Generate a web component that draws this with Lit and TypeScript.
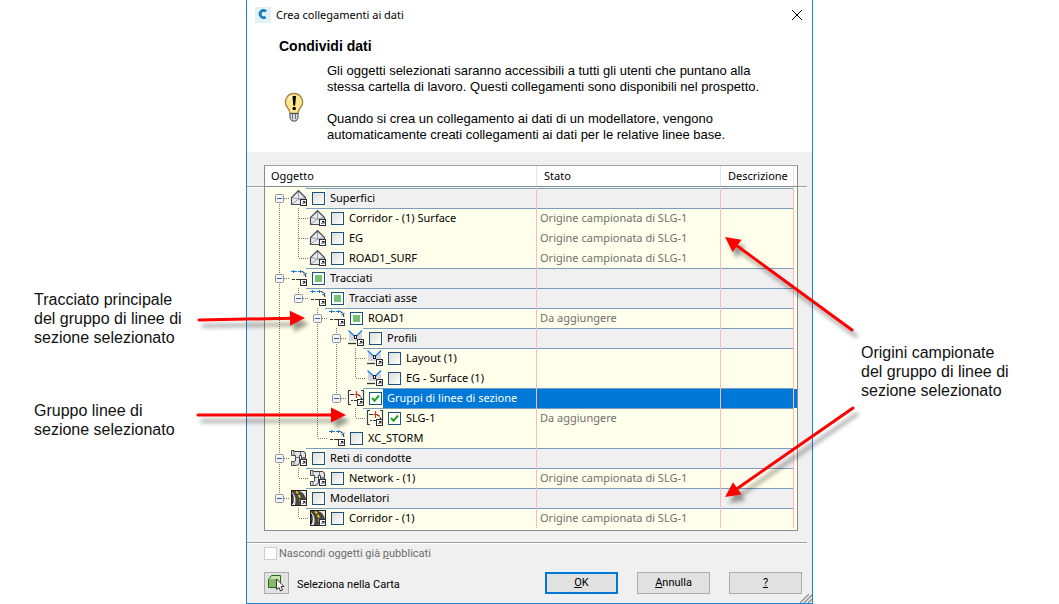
import { LitElement, html, css, svg, nothing } from "lit";
import { customElement } from "lit/decorators.js";

type Kind = "surface" | "alignment" | "profile" | "section" | "pipe" | "corridor";
type Check = "off" | "on" | "mixed";

interface Item {
  label: string;
  kind: Kind;
  check?: Check;
  state?: string;
  group?: boolean;
  selected?: boolean;
  children?: Item[];
}

interface Row {
  item: Item;
  /** For every ancestor level: does its vertical guide pass through this row? */
  trail: boolean[];
  up: boolean;
  down: boolean;
}

const SAMPLED = "Origine campionata di SLG-1";
const TO_ADD = "Da aggiungere";

const TREE: Item[] = [
  {
    label: "Superfici", kind: "surface", group: true,
    children: [
      { label: "Corridor - (1) Surface", kind: "surface", state: SAMPLED },
      { label: "EG", kind: "surface", state: SAMPLED },
      { label: "ROAD1_SURF", kind: "surface", state: SAMPLED },
    ],
  },
  {
    label: "Tracciati", kind: "alignment", group: true, check: "mixed",
    children: [
      {
        label: "Tracciati asse", kind: "alignment", group: true, check: "mixed",
        children: [
          {
            label: "ROAD1", kind: "alignment", check: "mixed", state: TO_ADD,
            children: [
              {
                label: "Profili", kind: "profile", group: true,
                children: [
                  { label: "Layout (1)", kind: "profile" },
                  { label: "EG - Surface (1)", kind: "profile" },
                ],
              },
              {
                label: "Gruppi di linee di sezione", kind: "section", group: true, check: "on", selected: true,
                children: [{ label: "SLG-1", kind: "section", check: "on", state: TO_ADD }],
              },
            ],
          },
          { label: "XC_STORM", kind: "alignment" },
        ],
      },
    ],
  },
  {
    label: "Reti di condotte", kind: "pipe", group: true,
    children: [{ label: "Network - (1)", kind: "pipe", state: SAMPLED }],
  },
  {
    label: "Modellatori", kind: "corridor", group: true,
    children: [{ label: "Corridor - (1)", kind: "corridor", state: SAMPLED }],
  },
];

function flatten(items: Item[], trail: boolean[] = []): Row[] {
  return items.flatMap((item, i) => {
    const down = i < items.length - 1;
    const row: Row = { item, trail, up: trail.length > 0 || i > 0, down };
    return [row, ...flatten(item.children ?? [], [...trail, down])];
  });
}

const shortcut = svg`
  <rect x="9.5" y="9.5" width="6" height="6" fill="#fff" stroke="#2b3038"/>
  <path d="M11.5 14 L13.8 11.7 M12 11.5 H14 V13.5" fill="none" stroke="#111"/>`;

const ART: Record<Kind, unknown> = {
  surface: svg`
    <path d="M.5 7 L7.5 .5 L14.5 7 V14.5 H.5 Z" fill="#e9ebee"/>
    <path d="M7.5 1 V9 M1 7.500 L7.500 9 L14.500 7.500 M7.500 9 L1 14 M7.500 9 L12 12" fill="none" stroke="#9aa0a7"/>
    <path d="M9 14.5 H.5 V7.5 L7.5 .7 L14.5 7.5 V9" fill="none" stroke="#4a4f57" stroke-width="1.2"/>`,
  alignment: svg`
    <path d="M0 1.500 H2 M3 1.500 H6 M7 1.500 H11" fill="none" stroke="#1e7fd6" stroke-width="1.2"/>
    <path d="M2.500 0 V3 M9.500 0 V3" stroke="#1e7fd6"/>
    <path d="M11 1.500 Q14.500 2.500 15 8" fill="none" stroke="#333" stroke-width="1.2" stroke-dasharray="3 1"/>
    <path d="M12.500 5 L15.500 3" stroke="#1e7fd6" stroke-width="1.2"/>
    <path d="M1 9.500 H4 M5 9.500 H9" stroke="#333" stroke-width="1.2"/>`,
  profile: svg`
    <path d="M1 1 L7.500 8 L14 1 V11 H1 Z" fill="#d3d6e0"/>
    <path d="M.5 .5 L7.5 7 L14 .5" fill="none" stroke="#1e84e8" stroke-width="1.400"/>
    <rect x="6.500" y="5.500" width="2" height="3" fill="#fff" stroke="#222"/>
    <path d="M0 13.500 H8" stroke="#333" stroke-width="1.300"/>`,
  section: svg`
    <path d="M3 .5 H.5 V14.500 H3 M13 .5 H15.500 V10" fill="none" stroke="#3a3f48" stroke-width="1.200"/>
    <path d="M2 4.500 H6 M3 10.500 H5 M6 10.500 H9" stroke="#333" stroke-width="1.200"/>
    <path d="M10 5 Q13 5.500 13.500 9" fill="none" stroke="#333" stroke-width="1.200" stroke-dasharray="3 1"/>
    <path d="M8.500 1 V8 M6.500 4.500 H11" stroke="#ef2a1e" stroke-width="1.200"/>`,
  pipe: svg`
    <path d="M.5 .5 H3 V1.500 H12 Q14.500 1.500 14.500 4 V9 H10.500 V5.500 H8.500 V12 Q8.500 15.500 5 15.500 H.5 V11.500 H3.500 Q4.500 11.500 4.500 10 V5.500 H.5 Z" fill="#e2e3e5" stroke="#3c4047"/>
    <path d="M3 1 V5.500 M4.500 7.500 H8.500 M10.500 7.500 H14.500 M3 11.500 V15.500 M9.500 2 V5" fill="none" stroke="#6b7078"/>`,
  corridor: svg`
    <rect x=".5" y=".5" width="15" height="15" fill="#e8e8e8" stroke="#222"/>
    <path d="M1 1 H8 Q13 2 15 9 V15 H4 Q6 7 1 2 Z" fill="#454545"/>
    <path d="M1 4 Q3 9 1 14" fill="none" stroke="#222" stroke-width="1.500"/>
    <path d="M5 1.500 Q10 5 9.500 15" fill="none" stroke="#ffd400" stroke-width="1.800" stroke-dasharray="3 1.500"/>`,
};

@customElement("tree-guide")
class TreeGuide extends LitElement {
  static properties = {
    up: { type: Boolean },
    down: { type: Boolean },
    branch: { type: Boolean },
    expander: { type: Boolean },
  };
  declare up: boolean;
  declare down: boolean;
  declare branch: boolean;
  declare expander: boolean;

  static styles = css`
    :host { display: block; flex: none; width: 19px; height: 20px; }
    svg { display: block; }
    .dots { stroke: #77776f; stroke-dasharray: 1 1; fill: none; }
    .box { fill: #f4f4f6; stroke: #8e959e; }
    .minus { stroke: #2b5fb4; }
  `;

  render() {
    return html`<svg width="19" height="20" aria-hidden="true">
      ${this.up ? svg`<path class="dots" d="M9.5 0 V10"/>` : nothing}
      ${this.down ? svg`<path class="dots" d="M9.5 10 V20"/>` : nothing}
      ${this.branch ? svg`<path class="dots" d="M10 10.5 H19"/>` : nothing}
      ${this.expander
        ? svg`<rect class="box" x="5.5" y="6.5" width="8" height="8" rx="1"/><path class="minus" d="M7 10.5 H12"/>`
        : nothing}
    </svg>`;
  }
}

@customElement("object-table")
class ObjectTable extends LitElement {
  static styles = css`
    :host { display: block; font: 12px/18px "Noto Sans", sans-serif; color: #000; }
    .frame {
      border: 1px solid #868a91;
      border-top-color: #a0a0a0;
      background: #ffffec;
      padding-bottom: 2px;
    }
    table { width: 100%; table-layout: fixed; border-collapse: separate; border-spacing: 0; }
    .c-state { width: 184px; }
    .c-desc { width: 73px; }
    .c-end { width: 3px; }
    th {
      height: 20px;
      padding: 0 0 0 6px;
      background: #fff;
      font-size: 11px;
      font-weight: 400;
      text-align: left;
      border-bottom: 1px solid #868a91;
      box-shadow: inset -1px 0 0 #e3e3e3;
    }
    th + th { padding-left: 7px; }
    th.end { padding: 0; box-shadow: none; }
    td { padding: 0; border-right: 1px solid #ffb9b9; }
    td.end { border-right: 0; }
    tbody::before { content: ""; display: block; height: 1px; }
    .tree { display: flex; height: 20px; padding-left: 5px; }
    .icon { flex: none; width: 17px; height: 20px; }
    .icon svg { display: block; overflow: visible; position: relative; z-index: 1; }
    .entry { flex: 1; min-width: 0; display: flex; align-items: center; padding-left: 6px; }
    .entry label {
      flex: 1;
      min-width: 0;
      height: 19px;
      padding-left: 4px;
      font-size: 11px;
      white-space: nowrap;
      margin-left: 1px;
    }
    .cell { padding-left: 3px; font-size: 11px; color: #6f6f6f; white-space: nowrap; }
    .entry, .cell { border-top: 1px solid transparent; box-sizing: border-box; height: 20px; }
    .group .entry, .group .cell { border-top-color: #7a9cbd; box-shadow: 0 1px 0 #7a9cbd; }
    .group .entry label, .group .cell { background: #f0f0f0; }
    .group .end .cell { border-top-color: transparent; background: none; box-shadow: none; padding: 0; }
    .selected .entry label, .selected .cell { background: #0078d7; color: #fff; }
    .selected .end .cell { background: #0078d7; background-clip: padding-box; }
    input {
      appearance: none;
      flex: none;
      width: 13px;
      height: 13px;
      margin: 0;
      border: 1px solid #1c5180;
      background: linear-gradient(135deg, #dcdcd7, #fff);
    }
    input:indeterminate {
      background: linear-gradient(#73c472, #73c472) center / 7px 7px no-repeat, #fff;
    }
    input:checked {
      background: url("data:image/svg+xml,%3Csvg xmlns='http://www.w3.org/2000/svg' width='11' height='11'%3E%3Cpath d='M2 5 L4.5 7.7 L9 2.5' fill='none' stroke='%2321a121' stroke-width='2'/%3E%3C/svg%3E") center no-repeat, #fff;
    }
  `;

  private row({ item, trail, up, down }: Row, index: number) {
    const classes = [item.group ? "group" : "", item.selected ? "selected" : ""].join(" ");
    return html`<tr class=${classes}>
      <td>
        <div class="tree">
          ${trail.map((through) => html`<tree-guide ?up=${through} ?down=${through}></tree-guide>`)}
          <tree-guide ?up=${up} ?down=${down} branch ?expander=${!!item.children}></tree-guide>
          <span class="icon"><svg width="18" height="20" viewBox="-2 -2 18 20" aria-hidden="true">${ART[item.kind]}${shortcut}</svg></span>
          <span class="entry">
            <input id="item-${index}" type="checkbox" .checked=${item.check === "on"} .indeterminate=${item.check === "mixed"}>
            <label for="item-${index}">${item.label}</label>
          </span>
        </div>
      </td>
      <td><div class="cell">${item.state ?? nothing}</div></td>
      <td><div class="cell"></div></td>
      <td class="end"><div class="cell"></div></td>
    </tr>`;
  }

  render() {
    return html`<div class="frame">
      <table>
        <colgroup><col><col class="c-state"><col class="c-desc"><col class="c-end"></colgroup>
        <thead><tr><th>Oggetto</th><th>Stato</th><th>Descrizione</th><th class="end"></th></tr></thead>
        <tbody>${flatten(TREE).map((r, i) => this.row(r, i))}</tbody>
      </table>
    </div>`;
  }
}

@customElement("share-dialog")
class ShareDialog extends LitElement {
  static styles = css`
    :host {
      display: block;
      box-sizing: border-box;
      border: solid #1883d7;
      border-width: 0 1px 1px;
      background: #f0f0f0;
      color: #000;
      font: 11px/16px "Noto Sans", sans-serif;
    }
    .top { background: #fff; padding-bottom: 9px; }
    .bar { display: flex; align-items: center; height: 30px; padding: 0 9px 0 8px; }
    .bar svg { display: block; flex: none; }
    .name { flex: 1; padding-left: 5px; }
    button { font: inherit; color: inherit; cursor: pointer; }
    .close { border: 0; background: none; padding: 0; width: 12px; height: 12px; }
    h1 { margin: 8px 0 9px 32px; font: 700 14px/16px "Liberation Sans", sans-serif; }
    .intro { display: grid; grid-template-columns: 80px 1fr; align-items: center; font: 13px/16px "Liberation Sans", sans-serif; }
    .intro .bulb { display: block; margin: 9px 0 0 36px; }
    .intro p { margin: 0 0 16px; max-width: 440px; }
    .intro p:last-child { margin: 0; }
    .band { display: flex; margin-top: 13px; }
    .band object-table { flex: 1; min-width: 0; }
    .rule { height: 1px; margin-top: 21px; background: #a0a0a0; border-bottom: 1px solid #fff; }
    .rule.start { width: 17px; }
    .rule.finish { width: 9px; margin-right: 5px; }
    .divider { height: 1px; background: #a0a0a0; border-bottom: 1px solid #fff; margin: 11px 5px 2px 0; }
    .hide, .actions { font-family: Roboto, sans-serif; }
    .hide { display: flex; align-items: center; gap: 2px; padding-left: 17px; color: #6d6d6d; height: 15px; }
    .hide input { appearance: none; width: 13px; height: 13px; margin: 0; border: 1px solid #ccc; background: #fff; }
    .actions { display: flex; align-items: center; padding: 11px 10px 0 17px; height: 22px; }
    .pick { display: grid; place-items: center; width: 25px; height: 22px; padding: 0; border: 1px solid #adadad; background: #e1e1e1; }
    .pick-name { flex: 1; padding: 4px 0 0 8px; }
    .push { width: 73px; height: 22px; padding: 0; line-height: 18px; border: 1px solid #adadad; background: #e1e1e1; }
    .push + .push { margin-left: 19px; }
    .push.main { border: 2px solid #0078d7; line-height: 16px; }
    .grip { display: block; margin-left: auto; }
  `;

  render() {
    return html`
      <div class="top">
        <div class="bar">
          <svg width="16" height="16" aria-hidden="true">
            <rect width="16" height="16" fill="#e4f0f8"/>
            <path d="M11 4.500 A3.400 3.600 0 1 0 10.500 10" fill="none" stroke="#1c7dbd" stroke-width="2.800"/>
          </svg>
          <span class="name">Crea collegamenti ai dati</span>
          <button class="close" aria-label="Chiudi"><svg width="12" height="12"><path d="M1 1 L11 11 M11 1 L1 11" stroke="#000"/></svg></button>
        </div>
        <h1>Condividi dati</h1>
        <div class="intro">
          <svg class="bulb" width="22" height="32" viewBox="0 0 22 32" aria-hidden="true">
            <path d="M11 1.5 a8.5 8.5 0 0 1 6.5 14 Q15.5 18 15 21.5 H7 Q6.500 18 4.500 15.500 A8.500 8.500 0 0 1 11 1.500 Z" fill="#ffe58c" stroke="#a8874a" stroke-width="1.4"/>
            <path d="M5.500 8 Q7 4 10 4" fill="none" stroke="#fff6d0" stroke-width="2"/>
            <path d="M9.500 4 H13 L12.200 13.500 H10.300 Z" fill="#000"/><circle cx="11.200" cy="16.500" r="1.700" fill="#000"/>
            <path d="M7 21.500 H15 V26 L13 29 H9 L7 26 Z" fill="#d9dbe0" stroke="#454951"/>
            <path d="M9.500 22 V27 M12.500 22 V27" stroke="#6c717a"/>
          </svg>
          <div>
            <p>Gli oggetti selezionati saranno accessibili a tutti gli utenti che puntano alla stessa cartella di lavoro. Questi collegamenti sono disponibili nel prospetto.</p>
            <p>Quando si crea un collegamento ai dati di un modellatore, vengono automaticamente creati collegamenti ai dati per le relative linee base.</p>
          </div>
        </div>
      </div>
      <div class="band"><div class="rule start"></div><object-table></object-table><div class="rule finish"></div></div>
      <div class="divider"></div>
      <div class="hide">
        <input id="hide" type="checkbox" disabled>
        <label for="hide">Nascondi oggetti già <u>p</u>ubblicati</label>
      </div>
      <div class="actions">
        <button class="pick" id="pick" aria-labelledby="pick-name">
          <svg width="19" height="18" aria-hidden="true">
            <path d="M1.500 5.500 L4.500 1.500 H13.500 V10.500 L10.500 13.500 H1.500 Z" fill="#c5e3b0" stroke="#1f6a12"/>
            <rect x="2" y="5" width="9" height="8" fill="#86b968"/>
            <path d="M9.500 5 V15.500 L12 13.500 L13.500 17 L15.500 16 L14 12.500 H17 Z" fill="#fff" stroke="#333"/>
          </svg>
        </button>
        <label class="pick-name" id="pick-name" for="pick">Seleziona nella Carta</label>
        <button class="push main"><u>O</u>K</button>
        <button class="push"><u>A</u>nnulla</button>
        <button class="push"><u>?</u></button>
      </div>
      <svg class="grip" width="12" height="9" aria-hidden="true"><path d="M0 9 L9 0 M4 9 L12 1 M8 9 L12 5" stroke="#8c8c8c" stroke-width="1.300"/></svg>
    `;
  }
}

interface Arrow { from: [number, number]; to: [number, number]; }

const ARROWS: Arrow[] = [
  { from: [199, 320], to: [305, 318] },
  { from: [198, 415], to: [346, 415] },
  { from: [852, 330], to: [725, 237] },
  { from: [853, 408], to: [725, 497] },
];

@customElement("app-root")
class AppRoot extends LitElement {
  static styles = css`
    :host { display: block; background: #fff; }
    .stage {
      position: relative;
      display: grid;
      grid-template-columns: minmax(0, 246fr) minmax(0, 567fr) minmax(0, 246fr);
      align-items: start;
    }
    .notes { font: 16px/19px "Liberation Sans", sans-serif; color: #111; }
    .notes p { margin: 0; max-width: 155px; }
    .left { padding: 290px 0 0 34px; }
    .left p + p { margin-top: 54px; }
    .right { padding: 343px 0 0 48px; }
    .arrows { position: absolute; left: 0; top: 0; width: 100%; height: 100%; pointer-events: none; z-index: 2; filter: drop-shadow(4px 6px 2px rgba(0, 0, 0, 0.4)); }
  `;

  private arrow({ from: [x1, y1], to: [x2, y2] }: Arrow) {
    const length = Math.hypot(x2 - x1, y2 - y1);
    const angle = (Math.atan2(y2 - y1, x2 - x1) * 180) / Math.PI;
    return svg`<g transform="translate(${x1} ${y1}) rotate(${angle})">
      <path d="M0 0 H${length - 12}" stroke="#f00" stroke-width="3" stroke-linecap="round"/>
      <path d="M${length} 0 L${length - 15} -7.500 V7.500 Z" fill="#f00"/>
    </g>`;
  }

  render() {
    return html`<main class="stage">
      <div class="notes left">
        <p>Tracciato principale del gruppo di linee di sezione selezionato</p>
        <p>Gruppo linee di sezione selezionato</p>
      </div>
      <share-dialog></share-dialog>
      <div class="notes right">
        <p>Origini campionate del gruppo di linee di sezione selezionato</p>
      </div>
      <svg class="arrows" viewBox="0 0 1059 603" preserveAspectRatio="xMidYMin meet" aria-hidden="true">${ARROWS.map((a) => this.arrow(a))}</svg>
    </main>`;
  }
}
